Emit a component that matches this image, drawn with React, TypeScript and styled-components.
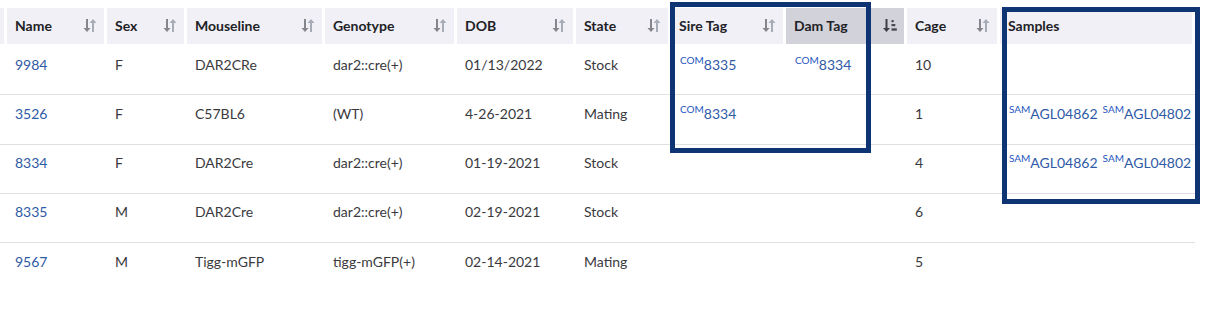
import React from "react";
import styled, { createGlobalStyle } from "styled-components";

const Global = createGlobalStyle`
  html, body { margin: 0; padding: 0; background: #ffffff; }
  body { font-family: Lato, "Open Sans", sans-serif; -webkit-font-smoothing: antialiased; }
`;

const Page = styled.div`
  position: relative;
  width: 1217px;
  height: 314px;
  padding-top: 8px;
  box-sizing: border-box;
  overflow: hidden;
`;

const Table = styled.table`
  table-layout: fixed;
  width: 1195px;
  border-collapse: separate;
  border-spacing: 0;
  font-family: Lato, "Open Sans", sans-serif;
  font-size: 14px;
`;

const Th = styled.th<{ $sorted?: boolean }>`
  height: 38px;
  padding: 0 7px 1px 8px;
  box-sizing: border-box;
  background: ${(p) => (p.$sorted ? "#d2d2da" : "#f0f0f6")};
  background-clip: padding-box;
  border-right: 3px solid #ffffff;
  border-bottom: 2px solid #ffffff;
  text-align: left;
  font-weight: 700;
  color: #222226;
  white-space: nowrap;
  vertical-align: middle;
`;

const HeadInner = styled.div`
  display: flex;
  align-items: center;
  justify-content: space-between;
`;

const Td = styled.td`
  padding: 7.5px 8px 19.75px 8px;
  line-height: 21px;
  vertical-align: top;
  color: #3a3a3e;
  border-bottom: 1px solid #e0e0e3;
  white-space: nowrap;
`;

const Row = styled.tr<{ $last?: boolean }>`
  & > td { border-bottom-color: ${(p) => (p.$last ? "transparent" : "#e0e0e3")}; }
`;

const Link = styled.span`
  color: #2f5aa6;
`;

const Tag = styled.span`
  color: #2f5aa6;
  margin-right: 4px;
  margin-left: 1px;
`;

const Sup = styled.sup<{ $size: number }>`
  font-size: ${(p) => p.$size}px;
  color: #1f56c0;
  vertical-align: super;
  line-height: 0;
`;

const Frame = styled.div<{ $l: number; $t: number; $w: number; $h: number }>`
  position: absolute;
  left: ${(p) => p.$l}px;
  top: ${(p) => p.$t}px;
  width: ${(p) => p.$w}px;
  height: ${(p) => p.$h}px;
  border: 5px solid #0e3474;
  box-sizing: border-box;
  pointer-events: none;
`;

const SortIcon = () => (
  <svg width="14" height="15" viewBox="0 0 14 15">
    <path d="M3 1 H5 V10 H7.5 L4 14 L0.5 10 H3 Z" fill="#85858c" />
    <path d="M9 14 H11 V5 H13.5 L10 1 L6.5 5 H9 Z" fill="#a8acb6" />
  </svg>
);

const SortedIcon = () => (
  <svg width="14" height="15" viewBox="0 0 14 15">
    <path d="M2.5 1 H4.5 V10 H7 L3.5 14 L0 10 H2.5 Z" fill="#3e3e44" />
    <g fill="#4a4a50">
      <rect x="8.5" y="2" width="2.2" height="2.2" />
      <rect x="8.5" y="6" width="3.8" height="2.2" />
      <rect x="8.5" y="10.3" width="5.3" height="2.4" />
    </g>
  </svg>
);

type Col = { key: string; label: string; width: number; sort?: "none" | "sorted" | "off" };

const columns: Col[] = [
  { key: "x", label: "", width: 7, sort: "off" },
  { key: "name", label: "Name", width: 100 },
  { key: "sex", label: "Sex", width: 80 },
  { key: "line", label: "Mouseline", width: 138 },
  { key: "geno", label: "Genotype", width: 132 },
  { key: "dob", label: "DOB", width: 119 },
  { key: "state", label: "State", width: 95 },
  { key: "sire", label: "Sire Tag", width: 115 },
  { key: "dam", label: "Dam Tag", width: 121, sort: "sorted" },
  { key: "cage", label: "Cage", width: 93 },
  { key: "samples", label: "Samples", width: 195, sort: "off" },
];

type Mouse = {
  name: string;
  sex: string;
  line: string;
  geno: string;
  dob: string;
  state: string;
  sire?: string;
  dam?: string;
  cage: string;
  samples?: string[];
};

const rows: Mouse[] = [
  { name: "9984", sex: "F", line: "DAR2CRe", geno: "dar2::cre(+)", dob: "01/13/2022", state: "Stock", sire: "8335", dam: "8334", cage: "10" },
  { name: "3526", sex: "F", line: "C57BL6", geno: "(WT)", dob: "4-26-2021", state: "Mating", sire: "8334", cage: "1", samples: ["AGL04862", "AGL04802"] },
  { name: "8334", sex: "F", line: "DAR2Cre", geno: "dar2::cre(+)", dob: "01-19-2021", state: "Stock", cage: "4", samples: ["AGL04862", "AGL04802"] },
  { name: "8335", sex: "M", line: "DAR2Cre", geno: "dar2::cre(+)", dob: "02-19-2021", state: "Stock", cage: "6" },
  { name: "9567", sex: "M", line: "Tigg-mGFP", geno: "tigg-mGFP(+)", dob: "02-14-2021", state: "Mating", cage: "5" },
];

const ComTag = ({ id }: { id?: string }) =>
  id ? (
    <Tag>
      <Sup $size={10}>COM</Sup>
      {id}
    </Tag>
  ) : null;

export default function App() {
  return (
    <Page>
      <Global />
      <Table>
        <colgroup>
          {columns.map((c) => (
            <col key={c.key} style={{ width: c.width }} />
          ))}
        </colgroup>
        <thead>
          <tr>
            {columns.map((c) => (
              <Th key={c.key} $sorted={c.sort === "sorted"} style={c.key === "x" ? { padding: 0 } : undefined}>
                {c.key === "x" ? null : (
                  <HeadInner>
                    <span>{c.label}</span>
                    {c.sort === "sorted" ? <SortedIcon /> : c.sort === "off" ? null : <SortIcon />}
                  </HeadInner>
                )}
              </Th>
            ))}
          </tr>
        </thead>
        <tbody>
          {rows.map((r, i) => (
            <Row key={r.name} $last={i === rows.length - 1}>
              <Td style={{ padding: 0 }} />
              <Td>
                <Link>{r.name}</Link>
              </Td>
              <Td>{r.sex}</Td>
              <Td>{r.line}</Td>
              <Td>{r.geno}</Td>
              <Td>{r.dob}</Td>
              <Td>{r.state}</Td>
              <Td>
                <ComTag id={r.sire} />
              </Td>
              <Td>
                <ComTag id={r.dam} />
              </Td>
              <Td>{r.cage}</Td>
              <Td>
                {r.samples?.map((s, j) => (
                  <Tag key={j}>
                    <Sup $size={10}>SAM</Sup>
                    {s}
                  </Tag>
                ))}
              </Td>
            </Row>
          ))}
        </tbody>
      </Table>
      <Frame $l={670} $t={2} $w={201} $h={151} />
      <Frame $l={1002} $t={7} $w={198} $h={197} />
    </Page>
  );
}
